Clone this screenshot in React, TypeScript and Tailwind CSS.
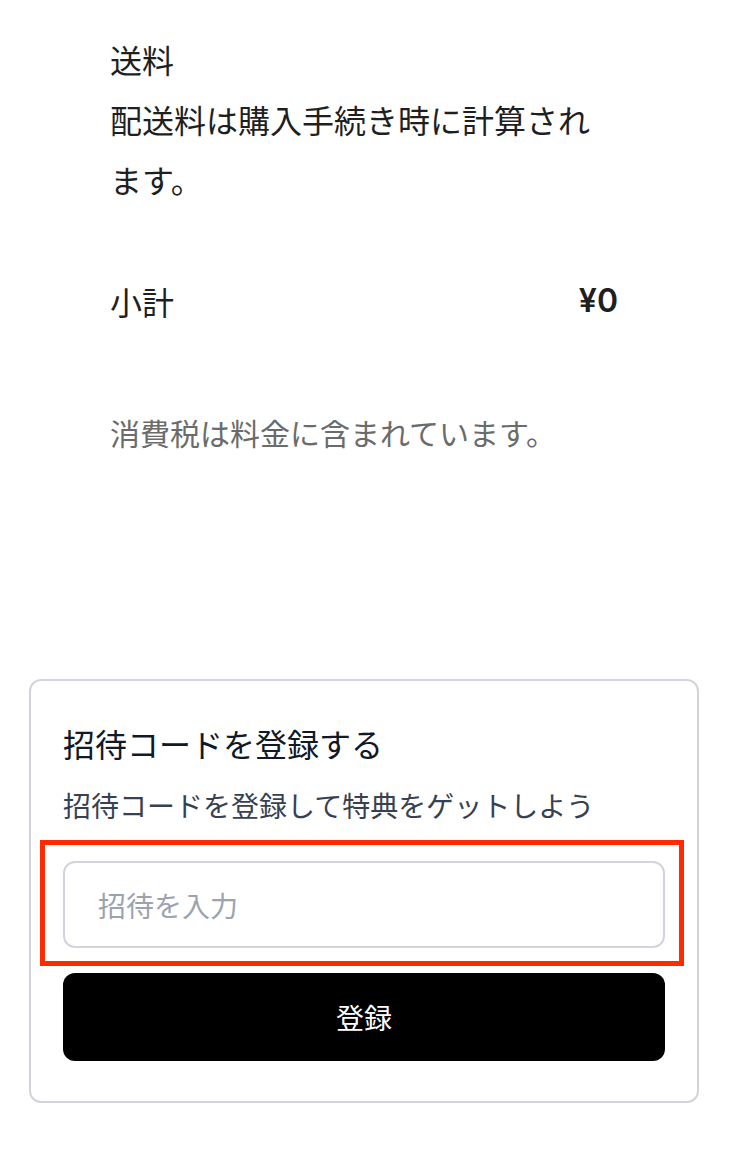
import React from "react";

export default function App() {
  const jp = { fontFamily: '"Noto Sans CJK JP", "Noto Sans", sans-serif' };
  return (
    <div className="w-[730px] min-h-[1149px] bg-white text-[#1f1f1f]" style={jp}>
      <div className="ml-[110px] w-[508px] pt-[29px]">
        <div className="text-[32px] leading-[60px]">送料</div>
        <div className="text-[32px] leading-[60px]">配送料は購入手続き時に計算されます。</div>
        <div className="mt-[62px] flex h-[60px] items-center justify-between text-[32px] leading-[60px]">
          <span>小計</span>
          <span className="font-semibold text-[32px]" style={{ fontFamily: 'Inter, "Noto Sans CJK JP", sans-serif' }}>¥0</span>
        </div>
        <div className="mt-[71px] text-[30px] leading-[60px] text-[#6b6b6b]">消費税は料金に含まれています。</div>
      </div>
      <div className="mx-[29px] mt-[217px] w-[670px] rounded-[12px] border-2 border-[#d1d5db] px-[32px] pt-[30px] pb-[40px]">
        <div className="text-[32px] leading-[64px] text-[#111827]">招待コードを登録する</div>
        <div className="mt-[10px] text-[28px] leading-[40px] text-[#374151]">招待コードを登録して特典をゲットしよう</div>
        <div className="relative mt-[36px]">
          <input
            className="block h-[87px] w-full rounded-[12px] border-2 border-[#d1d5db] px-[33px] text-[28px] text-[#111827] outline-none placeholder:text-[#9ca3af]"
            style={jp}
            placeholder="招待を入力"
          />
          <div className="pointer-events-none absolute -top-[21px] -bottom-[18px] -left-[23px] -right-[19px] border-[5px] border-[#ff2b00]" />
        </div>
        <button
          className="mt-[25px] flex h-[88px] w-full items-center justify-center rounded-[12px] bg-black text-[28px] text-white"
          style={jp}
        >
          登録
        </button>
      </div>
    </div>
  );
}
